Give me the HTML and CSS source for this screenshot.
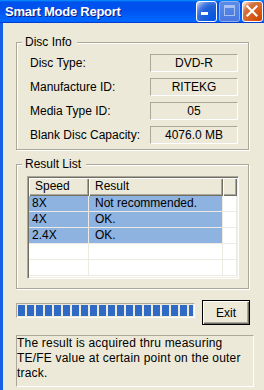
FILE: index.html
```html
<!DOCTYPE html>
<html lang="en">
<head>
    <meta charset="UTF-8">
    <meta name="viewport" content="width=device-width, initial-scale=1.0">
    <title>Smart Mode Report</title>
    <link rel="stylesheet" href="styles.css">
</head>
<body>
    <div class="window">
        <div class="titlebar">
            <span class="title">Smart Mode Report</span>
            <div class="controls">
                <span class="ctl ctl-min">
                    <svg width="19" height="19" viewBox="0 0 19 19"><rect x="4" y="10" width="7" height="3" fill="#fff"/></svg>
                </span>
                <span class="ctl ctl-max">
                    <svg width="19" height="19" viewBox="0 0 19 19"><rect x="4.5" y="3.5" width="10" height="10" fill="none" stroke="#a8c0f2"/><rect x="4" y="3" width="11" height="3" fill="#a8c0f2"/></svg>
                </span>
                <span class="ctl ctl-close">
                    <svg width="19" height="19" viewBox="0 0 19 19"><path d="M4.5 4.5 L13.5 13.5 M13.5 4.5 L4.5 13.5" stroke="#fff" stroke-width="2.2" stroke-linecap="square"/></svg>
                </span>
            </div>
        </div>

        <div class="client">
            <fieldset class="group group-disc">
                <legend>Disc Info</legend>
                <div class="fields">
                    <div class="field"><span class="label">Disc Type:</span><span class="value">DVD-R</span></div>
                    <div class="field"><span class="label">Manufacture ID:</span><span class="value">RITEKG</span></div>
                    <div class="field"><span class="label">Media Type ID:</span><span class="value">05</span></div>
                    <div class="field"><span class="label">Blank Disc Capacity:</span><span class="value">4076.0 MB</span></div>
                </div>
            </fieldset>

            <fieldset class="group group-result">
                <legend>Result List</legend>
                <div class="listview">
                    <div class="lv-head"><span>Speed</span><span>Result</span><span></span></div>
                    <div class="lv-row sel"><span>8X</span><span>Not recommended.</span><span></span></div>
                    <div class="lv-row sel"><span>4X</span><span>OK.</span><span></span></div>
                    <div class="lv-row sel"><span>2.4X</span><span>OK.</span><span></span></div>
                    <div class="lv-row"><span></span><span></span><span></span></div>
                    <div class="lv-row"><span></span><span></span><span></span></div>
                </div>
            </fieldset>

            <div class="actions">
                <div class="progress"><div class="progress-fill"></div></div>
                <button type="button" class="btn-exit">Exit</button>
            </div>

            <div class="note">The result is acquired thru measuring<br>TE/FE value at certain point on the outer<br>track.</div>
        </div>
    </div>
</body>
</html>
```

FILE: styles.css
```css
* {
    box-sizing: border-box;
}
body {
    margin: 0;
    font-family: "Liberation Sans", Arial, sans-serif;
    font-size: 12px;
    color: #000;
    background-color: #ece9d8;
}
.window {
    width: 264px;
    height: 390px;
    display: flex;
    flex-direction: column;
    overflow: hidden;
}

/* title bar */
.titlebar {
    height: 23px;
    flex: none;
    display: flex;
    justify-content: space-between;
    align-items: flex-start;
    background: linear-gradient(180deg, #0997ff, #0053ee 8%, #0050ee 40%, #0066ff 88%, #0066ff 93%, #005bff 95%, #003dd7 96%, #003dd7);
}
.title {
    padding-left: 5px;
    line-height: 23px;
    color: #fff;
    font-weight: bold;
    font-size: 13px;
    letter-spacing: -0.25px;
    text-shadow: 1px 1px #0a1883;
}
.controls {
    display: flex;
    gap: 2px;
    padding: 1px 1px 0 0;
}
.ctl {
    display: block;
    width: 21px;
    height: 21px;
    border: 1px solid #fff;
    border-radius: 3px;
}
.ctl svg {
    display: block;
}
.ctl-min {
    background: radial-gradient(circle at 90% 90%, #0054e9 0%, #2263d5 55%, #4479e4 70%, #a3bbec 90%, #fff 100%);
}
.ctl-max {
    border-color: #93aeec;
    background: linear-gradient(180deg, #5b8be9, #4a78e0);
}
.ctl-close {
    background: radial-gradient(circle at 90% 90%, #cc4600 0%, #dc6527 55%, #cd7546 70%, #ffccb2 90%, #fff 100%);
}

/* client area */
.client {
    flex: 1;
    border-left: 3px solid #1660e8;
    padding: 12px 0 0 13px;
}
.group {
    margin: 0;
    padding: 0;
    width: 233px;
    border: 1px solid #aca899;
    box-shadow: inset 1px 1px #fff, 1px 1px #fff;
}
.group legend {
    margin-left: 5px;
    padding: 0 5px 0 3px;
    line-height: 14px;
    background-color: #ece9d8;
}
.group-result {
    margin-top: 7px;
}
.fields {
    display: flex;
    flex-direction: column;
    gap: 6px;
    padding: 5px 0 5px 13px;
}
.field {
    display: flex;
    align-items: center;
}
.label {
    width: 120px;
}
.value {
    width: 88px;
    height: 18px;
    line-height: 16px;
    text-align: center;
    border: 1px solid;
    border-color: #aca899 #fff #fff #aca899;
}

/* list view */
.listview {
    margin: 5px 0 9px 10px;
    width: 212px;
    height: 103px;
    padding: 1px;
    background-color: #fff;
    border: 1px solid;
    border-color: #aca899 #fff #fff #aca899;
    box-shadow: inset 1px 1px #716f64, inset -1px -1px #f1efe2;
}
.lv-head, .lv-row {
    display: grid;
    grid-template-columns: 60px 134px 14px;
}
.lv-head {
    height: 18px;
}
.lv-head span {
    background-color: #ece9d8;
    box-shadow: inset 1px 1px #fff, inset -1px -1px #716f64, inset -2px -2px #aca899;
    padding-left: 6px;
    line-height: 17px;
}
.lv-row {
    height: 16px;
}
.lv-row span {
    border-right: 1px solid #ecebe2;
    border-bottom: 1px solid #ecebe2;
    padding-left: 6px;
    line-height: 15px;
}
.lv-row span:first-child {
    padding-left: 3px;
}
.lv-row.sel span:not(:last-child) {
    background-color: #8eb3e1;
}

/* progress + exit */
.actions {
    display: flex;
    align-items: flex-start;
    margin-top: 11px;
}
.progress {
    margin-top: 3px;
    width: 179px;
    height: 15px;
    padding: 1px;
    border: 1px solid;
    border-color: #aca899 #fff #fff #aca899;
}
.progress-fill {
    height: 100%;
    background: repeating-linear-gradient(90deg, #316ac5 0 7px, transparent 7px 9px);
}
.btn-exit {
    margin-left: 7px;
    width: 48px;
    height: 25px;
    padding: 0;
    font-family: inherit;
    font-size: 12px;
    color: #000;
    background-color: #ece9d8;
    border: 1px solid #000;
    border-radius: 0;
    box-shadow: inset 1px 1px #fff, inset -1px -1px #716f64, inset -2px -2px #aca899;
}

.note {
    margin-top: 10px;
    width: 238px;
    height: 52px;
    line-height: 15px;
    letter-spacing: 0.2px;
    border: 1px solid;
    border-color: #aca899 #fff #fff #aca899;
}
```
